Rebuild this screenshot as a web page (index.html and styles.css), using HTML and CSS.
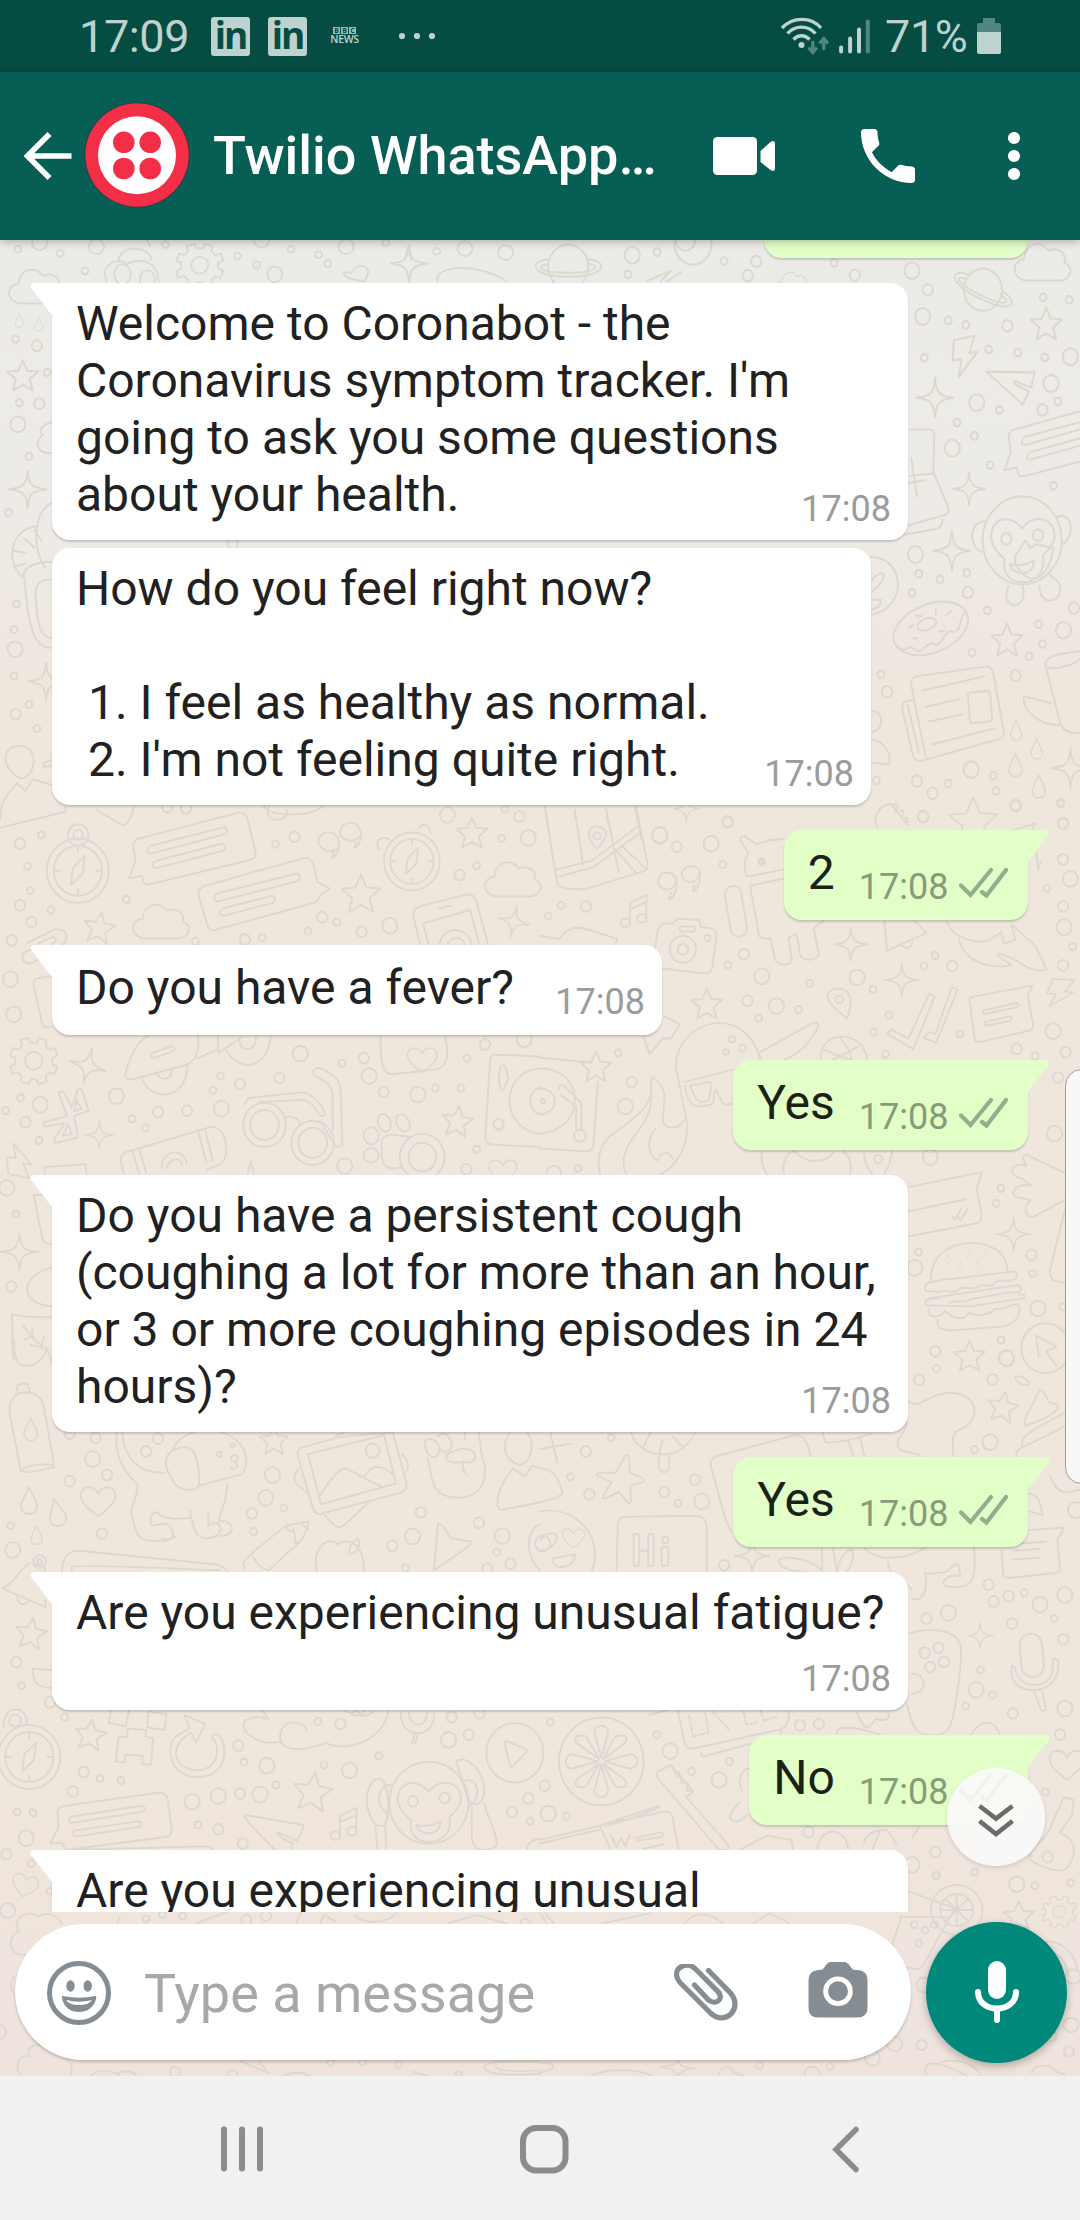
FILE: index.html
```html
<!DOCTYPE html>
<html lang="en">
<head>
<meta charset="utf-8">
<title>Chat</title>
<link rel="stylesheet" href="styles.css">
</head>
<body>
<div class="phone">
  <div class="status">
    <span class="status-time">17:09</span>
    <span class="linkedin">in</span>
    <span class="linkedin">in</span>
    <span class="bbc"><span class="bbc-row"><b>B</b><b>B</b><b>C</b></span><span class="bbc-news">NEWS</span></span>
    <svg class="status-dots" width="38" height="8" viewBox="0 0 38 8"><circle cx="4" cy="4" r="3.1"/><circle cx="19" cy="4" r="3.1"/><circle cx="34" cy="4" r="3.1"/></svg>
    <svg class="wifi" width="50" height="38" viewBox="780 17 50 38" fill="none">
      <g stroke="#bed2cf" stroke-width="3.4"><path d="M782 28C793 16.500 811 16.500 821 28"/><path d="M787.500 33.500C795 25 808 25 815.500 33.500"/><path d="M793.500 39.500C798 34.500 805 34.500 809.500 39.500"/></g>
      <circle cx="801.500" cy="45" r="3" fill="#bed2cf"/>
      <path d="M812.800 41V51M808.500 47.500L812.800 52.500 817 47.500M823.800 50V40M819.500 43.500L823.800 38.500 828 43.500" stroke="#528680" stroke-width="3.200"/>
    </svg>
    <svg class="signal" width="31" height="35" viewBox="838.500 19.500 31 35" stroke-width="4" stroke-linecap="round" stroke="#bed2cf"><path d="M840.600 48V52M849.600 39V52M858.500 30V52"/><path d="M867.300 22V52" stroke="#528680"/></svg>
    <span class="percent">71%</span>
    <svg class="battery" width="24" height="36" viewBox="0 0 24 36"><path d="M6 0H18V5H22Q24 5 24 7V15H0V7Q0 5 2 5H6Z" fill="#528680"/><path d="M0 14H24V34Q24 36 22 36H2Q0 36 0 34Z" fill="#bed2cf"/></svg>
  </div>

  <header class="header">
    <svg class="back" width="48" height="50" viewBox="24.500 131 48 50" fill="none" stroke="#fff" stroke-width="5.600"><path d="M50 134L28 156 50 178M28 156H72"/></svg>
    <svg class="avatar" width="106" height="106" viewBox="0 0 106 106"><circle cx="53" cy="53" r="52.500" fill="#37333f"/><circle cx="53" cy="53" r="51.700" fill="#f22f46"/><circle cx="53" cy="53.300" r="39" fill="#fff"/><g fill="#f22f46"><circle cx="39.800" cy="40.300" r="10.800"/><circle cx="66.200" cy="40.300" r="10.800"/><circle cx="39.800" cy="66.500" r="10.800"/><circle cx="66.200" cy="66.500" r="10.800"/></g></svg>
    <h1 class="title">Twilio WhatsApp…</h1>
    <svg class="video" width="62" height="38" viewBox="0 0 62 38" fill="#fff"><rect width="44" height="38" rx="4.500"/><path d="M47.500 14L57.500 5Q62 2.500 62 7V31Q62 35.500 57.500 33L47.500 25Z"/></svg>
    <svg class="call" width="54" height="54" viewBox="3 3 18 18" fill="#fff"><path d="M6.620 10.790c1.440 2.830 3.760 5.140 6.590 6.590l2.200-2.200c.270-.270.670-.360 1.020-.240 1.120.370 2.330.570 3.570.570.550 0 1 .450 1 1V20c0 .550-.450 1-1 1-9.390 0-17-7.610-17-17 0-.550.450-1 1-1h3.500c.550 0 1 .450 1 1 0 1.250.200 2.450.570 3.570.110.350.030.740-.250 1.020l-2.200 2.200z"/></svg>
    <svg class="menu" width="14" height="50" viewBox="0 0 14 50" fill="#fff"><circle cx="7" cy="7" r="6.100"/><circle cx="7" cy="25" r="6.100"/><circle cx="7" cy="43" r="6.100"/></svg>
  </header>

  <main class="chat">
    <svg class="wallpaper" width="1080" height="1836" viewBox="0 240 1080 1836" fill="none" stroke-width="5.500" stroke-linejoin="round" stroke-linecap="round">
      <defs>
        <marker id="s" markerUnits="userSpaceOnUse" markerWidth="60" markerHeight="60" overflow="visible"><circle r="10" class="ink"/></marker>
        <marker id="m" markerUnits="userSpaceOnUse" markerWidth="60" markerHeight="60" overflow="visible"><circle r="15" class="ink"/></marker>
        <marker id="l" markerUnits="userSpaceOnUse" markerWidth="60" markerHeight="60" overflow="visible"><circle r="22" class="ink"/></marker>
        <path id="star" d="M0-44L13-15 45-13 20 9 29 40 0 24-28 40-20 9-45-12-13-15Z"/>
        <path id="spark" d="M0-52C3-12 12-4 54 0 12 5 4 12 0 52-4 12-12 5-54 0-12-4-3-12 0-52Z"/>
        <path id="cloud" d="M-50 46C-92 40-92-6-54-10C-52-52-4-62 16-32C48-44 70-22 62-2C94 12 80 44 48 46Z"/>
        <path id="heart" d="M0 42C-20 25-54 5-50-20C-46-46-10-46 0-20C10-46 46-46 50-20C54 5 20 25 0 42Z"/>
        <path id="drop" d="M0-38C12-10 24 0 24 18C22 44-20 44-23 18C-24 0-10-12 0-38Z"/>
        <g id="gear"><path d="M-14-64L-10-50H10L14-64 36-58 34-42 46-30 62-36 68-14 54-8V10L68 16 60 38 46 32 34 44 38 58 14 66 8 52H-8L-14 66-38 58-34 44-46 32-62 38-68 16-54 10V-8L-68-14-60-36-46-30-34-42-38-58Z"/><circle r="25"/></g>
        <g id="chatbox"><path d="M-172-40Q-178-62-155-68L130-140Q152-145 158-125L182-30Q186-12 165-8L-125 60Q-140 64-145 50L-148 36-186 44-166-5Z"/><path d="M-128-46Q-140-22-120-26L92-80Q108-88 92-100L-122-48M-112-4Q-124 18-104 14L88-34Q104-44 86-54L-106-6"/></g>
        <path id="bolt" d="M-30-42L30-54 14-8 38-12-16 54-8 8-34 10Z"/>
        <g id="planet"><circle r="58"/><path d="M-56-20C-120-14-106 26 0 26C110 26 120-14 58-20M-60-6C-100-2-80 16 0 16C84 16 96-4 60-8" /></g>
        <g id="clock"><circle r="90"/><circle r="70"/><path d="M0-70V-52M0 70V52M-70 0H-52M70 0H52M-20 40L-14-8 20-42 14 8Z"/></g>
        <g id="note"><ellipse cx="-22" cy="34" rx="14" ry="12"/><ellipse cx="26" cy="22" rx="14" ry="12"/><path d="M-10 32L-8-22 40-44 38 22M-8-4L38-24"/></g>
        <g id="monkey"><circle r="115"/><path d="M-90-10C-90-62-30-70 0-30C30-74 96-60 94-8C92 10 76 26 60 40C70 90 30 110 0 110C-40 108-60 80-50 50C-74 30-88 15-90-10Z"/><circle cx="-46" cy="-4" r="15"/><circle cx="46" cy="-14" r="15"/><path d="M-36 62Q0 70 34 52Q34 84 0 86Q-30 84-36 62ZM-110-50C-150-50-160 10-118 30M100-60C140-80 160-20 118 10"/></g>
      </defs>

      <!-- Top left -->
      <g transform="translate(0 240) scale(.3444 .3333)">
        <polyline points="52,28 175,40 480,14 690,48 845,28 925,44 1268,34 1120,8" class="s"/>
        <polyline points="115,8 280,20 760,0 1005,20 1350,26 1468,38" class="l"/>
        <path d="M345 60C350 10 440 20 440 60M370 0C390-30 430-10 436 20M1175 60L1185 20 1195 60"/>
        <use href="#gear" x="580" y="76"/>
      </g>
      <g transform="translate(0 260) scale(.3444 .3571)">
        <use href="#cloud" x="108" y="76"/><use href="#spark" x="1188" y="10"/>
        <path d="M310 60C290 20 330-10 370 10C420-10 460 10 460 60M1270 60C1260 10 1400 10 1470 60M1060 60C980 50 990 30 1020 36C1040 0 1080 20 1066 44Z"/>
        <ellipse cx="356" cy="40" rx="24" ry="28"/><ellipse cx="428" cy="55" rx="22" ry="26"/>
        <use href="#drop" transform="translate(56 170) scale(.5)"/><use href="#drop" transform="translate(112 180) scale(.5)"/>
        <use href="#star" x="66" y="325"/><use href="#spark" x="80" y="642"/><use href="#spark" x="134" y="1180"/>
        <polyline points="247,30 745,14 952,10 45,222 137,315 56,400 84,550 25,708 48,964 41,1035 41,1165 84,1245 107,1312" class="s"/>
        <polyline points="107,240 114,402 45,1272 676,794 540,1536 486,1532" class="m"/>
        <polyline points="52,460 44,1090 798,40" class="l"/>
        <path d="M150 680C100 700 90 800 130 860M150 455C120 460 110 480 125 490C95 510 110 545 150 540M110 745C30 750 10 850 70 890C80 960 80 1090 150 1086M100 755L120 785M70 780L100 805M40 815L75 820M40 860L72 850M150 895C100 890 100 930 105 960C110 1010 110 1050 150 1060M70 890C60 860 110 845 150 845"/>
        <path d="M55 1360C0 1360 5 1430 62 1452C112 1440 110 1360 55 1360ZM150 1400L125 1410 130 1420 150 1416M0 1568C0 1500 40 1480 50 1465L74 1486 96 1454 150 1470M190 1530V1545L0 1590M390 1530C380 1560 370 1590 350 1580L280 1540"/>
      </g>

      <!-- Top right -->
      <g transform="translate(540 240) scale(.3444 .3827)">
        <use href="#planet" x="82" y="70"/><circle cx="444" cy="10" r="54"/><circle cx="422" cy="0" r="28"/><use href="#cloud" x="1460" y="60"/>
        <use href="#planet" transform="translate(1286 130) rotate(24) scale(.95)"/><use href="#cloud" transform="translate(735 114) scale(.6)"/>
        <path d="M310 108L380 80 350 108M370 108L408 85"/>
        <use href="#star" x="1470" y="220"/><use href="#bolt" x="1232" y="304"/><use href="#spark" x="1147" y="412"/><use href="#spark" transform="translate(1246 650) scale(.85)"/><use href="#spark" x="1196" y="812"/>
        <path d="M1296 344L1436 346 1426 386 1378 368 1376 376 1420 396 1402 430Z"/>
        <use href="#chatbox" transform="translate(1525 560) scale(.95)"/>
        <path d="M1075 495H1130Q1145 495 1145 510L1142 605 1186 700Q1190 715 1170 720L1060 748M1142 610L1074 616M1078 570L1095 670M1065 635L1118 628M1168 730Q1170 750 1150 755L1060 770"/>
        <g transform="translate(1400 785)"><use href="#monkey"/><path d="M-20 40L10 0 24 20 40 10 90 20C80 100 20 130-20 60ZM-40 120C-70 180 20 190 2 120M50 120C50 180 130 160 106 110L80 90"/></g>
        <path d="M962 828C1060 830 1070 960 962 980M962 890C1000 850 1020 880 962 920M962 940H990Q990 960 965 965"/>
        <g transform="translate(1135 1015) rotate(-18)"><ellipse rx="112" ry="64"/><ellipse cx="-8" cy="-14" rx="28" ry="15"/><path d="M-110 10C-90 50-80 10-60 40C-40 60-20 20 0 46C20 50 40 10 60 30C90 30 80 0 108-8M-60-20L-45-25M-30-45L-15-38M30-45L24-30M55-20L70-25M-60 8L-45 12M20 15L35 18"/></g>
        <use href="#star" x="1356" y="1046"/>
        <path d="M1078 1160Q1075 1145 1095 1140L1290 1115Q1312 1112 1316 1132L1347 1285Q1350 1300 1330 1305L1110 1360Q1090 1366 1082 1345L1052 1225Q1050 1205 1070 1204L1086 1202ZM1086 1202L1120 1350M1068 1215L1100 1340M1110 1178L1290 1140M1120 1220L1215 1200M1130 1258L1225 1240M1140 1318L1320 1276"/><rect x="1245" y="1180" width="65" height="80" rx="8" transform="rotate(-5 1278 1220)"/>
        <path d="M1568 1075C1500 1080 1460 1090 1468 1115C1500 1125 1550 1110 1568 1095M1470 1120L1510 1260C1520 1290 1550 1290 1568 1288M1485 1210L1405 1192C1400 1230 1450 1270 1512 1268"/>
        <use href="#drop" transform="translate(1382 1282) scale(.7)"/><use href="#drop" transform="translate(1442 1330) scale(.7)"/><use href="#drop" transform="translate(1380 1372) scale(.8)"/><use href="#drop" transform="translate(1448 1428) scale(.8)"/><use href="#spark" x="1540" y="1380"/>
        <path d="M14 1480L30 1568M275 1480L295 1568M102 1490V1510M195 1500V1520M962 1230C1000 1230 1000 1280 966 1285M962 1305C1000 1310 1020 1340 1014 1370L962 1366"/>
        <polyline points="340,32 535,55 255,90 854,60 1461,150 1536,156 1186,210 1236,222 1116,308 1303,286 1387,294 1466,307 1334,444 1504,422 1211,477 1261,512 1307,588 1491,642 1100,872 1161,887 1080,922 1239,870 1299,968 1448,1004 1459,1056 1254,1078 1420,1088 990,1135 1316,1400 1186,1420 1324,1440 1512,1470 977,1412" class="s"/>
        <polyline points="628,56 603,93 914,92 1126,130 1357,224 1459,444 1242,921 1550,962 1381,1138 1008,1180 1094,1414 1140,1446 1381,1478 1112,1506 545,1520 1519,1524" class="m"/>
        <polyline points="268,40 1080,80 1111,200 1268,425 1484,375 1197,544 1540,305 1520,1020 1252,1384 1090,822 348,1556" class="l"/>
      </g>

      <!-- Middle left -->
      <g transform="translate(0 800) scale(.3444 .3571)">
        <use href="#clock" x="226" y="198"/><circle cx="227" cy="98" r="30"/><circle cx="227" cy="98" r="14"/>
        <use href="#chatbox" x="560" y="176"/>
        <path d="M578 272Q572 248 595 240L880 164Q902 158 910 180L922 230 958 248 928 268Q926 285 905 290L625 364Q608 368 602 350ZM630 262Q612 280 634 284L862 228Q880 216 862 206L630 262M646 304Q628 320 650 324L792 288Q806 276 790 268L646 304"/>
        <path d="M985 130C960 160 910 130 928 104C950 76 990 94 984 130Q982 155 965 162L968 145M1048 100C1020 130 975 105 990 80C1010 50 1050 64 1048 100Q1046 125 1030 134L1034 118"/>
        <use href="#clock" transform="translate(1196 172) scale(.9)"/><path d="M1100 138C1085 110 1110 100 1130 110M1214 80C1230 60 1250 70 1250 94"/>
        <use href="#star" x="1370" y="93"/><use href="#star" stroke-width="4.500" transform="translate(1048 264) scale(1.250)"/><use href="#star" transform="translate(288 358) rotate(10)"/>
        <use href="#cloud" x="1490" y="224"/><use href="#cloud" x="468" y="342"/><use href="#spark" transform="translate(1492 340) scale(.85) rotate(12)"/>
        <path d="M1220 406L1200 325Q1198 305 1218 298L1355 265Q1375 262 1382 280L1418 406M1245 406L1228 345 1365 308 1392 406M1275 303L1310 296M1275 406C1285 350 1360 350 1370 406M1300 406C1305 380 1345 380 1350 406"/>
        <path d="M80 400L160 362C200 360 200 390 180 406M110 402L150 384C165 382 165 395 150 405M90 420C60 420 55 455 85 458C95 456 105 450 112 446M150 492L105 500Q95 505 98 520L122 625Q126 640 150 636"/>
        <path d="M770 14C740 36 900 60 940 14M780 20C760 60 830 70 835 30"/>
        <use href="#gear" x="98" y="730"/><use href="#spark" transform="translate(255 745) rotate(15)"/><use href="#spark" transform="translate(288 938) scale(.75)"/>
        <path d="M170 820Q175 812 185 818L208 862 225 812Q235 805 240 818L258 870 215 885 226 945 165 960Q155 958 158 948L188 905 130 915Q122 910 128 902L195 885 170 820M222 840L236 865 216 872ZM198 908L208 935 182 940Z"/>
        <path d="M430 660C390 680 370 740 363 770Q365 785 385 782L540 742C570 730 580 700 575 660M440 710L495 690Q510 690 505 702L450 722Q430 720 440 710ZM572 724L632 698M413 780C430 840 540 850 545 742M454 765C470 790 500 785 500 752M632 660L635 708 700 665M655 700C700 770 780 750 786 660M695 665C690 710 750 710 742 660"/>
        <circle cx="768" cy="910" r="62"/><circle cx="768" cy="910" r="42"/><circle cx="908" cy="960" r="62"/><circle cx="908" cy="960" r="42"/>
        <path d="M830 890C850 880 870 895 872 912M712 850L720 835 880 818C920 830 940 860 944 880Q935 890 925 880C910 850 890 838 870 840L750 846M908 762C915 745 930 750 940 756C990 780 990 800 990 830L994 965Q985 975 975 970L930 900M966 925V830C966 800 950 790 920 775Q905 770 908 762"/>
        <path d="M1105 660C1105 720 1105 770 1140 768L1270 754C1310 740 1300 690 1292 660"/><use href="#heart" transform="translate(1226 728) scale(.85)"/>
        <path d="M1568 718L1440 713Q1425 712 1423 730L1409 940Q1408 962 1428 965L1568 972M1568 752C1450 760 1450 920 1568 935M1568 805C1530 815 1530 870 1568 880M1452 750Q1462 735 1468 750L1476 780 1464 808Q1456 820 1452 806L1448 780Z"/><circle cx="1448" cy="908" r="15"/>
        <ellipse cx="1116" cy="904" rx="18" ry="26" transform="rotate(-20 1116 904)"/><ellipse cx="1170" cy="904" rx="18" ry="26" transform="rotate(-30 1170 904)"/><ellipse cx="1078" cy="940" rx="22" ry="24"/><ellipse cx="1078" cy="995" rx="22" ry="20"/>
        <path d="M1190 945C1150 935 1105 930 1108 960C1110 990 1100 1030 1140 1032L1168 1028"/><circle cx="1226" cy="1000" r="65"/><circle cx="1226" cy="1000" r="40"/>
        <use href="#star" transform="translate(1328 900) rotate(8)"/><use href="#heart" transform="translate(1460 1040) scale(.8)"/><use href="#bolt" transform="translate(54 1010) scale(1 -.9)"/>
        <path d="M360 1050L350 1010Q350 990 370 985L610 916C660 910 670 1000 640 1020L600 1035M385 985L405 1048M405 980L425 1045M575 925L600 1018M595 920L618 1012M470 1030C465 980 540 970 542 1020M485 1030C490 1000 525 1000 528 1022M130 1050V1028L248 1020 252 1048M718 1050L728 1012 738 1050"/>
        <path d="M150 1106H98L122 1225Q128 1245 150 1245M150 1310C60 1330 50 1410 150 1418M150 1448C110 1450 80 1450 34 1440C40 1480 30 1550 42 1568M68 1474L125 1535M94 1510V1480M94 1500L70 1512M120 1532L128 1500"/><use href="#spark" x="56" y="1265"/>
        <polyline points="120,98 80,186 88,254 148,308 367,278 800,124 895,367 761,386 1384,184 1456,108 1466,26 60,834 16,870 113,954 640,773 618,813 384,893 422,918 993,737 1264,807 1338,807 1356,723 1384,978 46,1160 978,342 567,396" class="s"/>
        <polyline points="58,122 58,295 91,342 34,393 855,103 1334,210 1050,369 935,328 711,390 1508,46 74,902 459,874 543,870 697,795 811,778 1056,723 1114,817 1408,685 33,1362 1354,1034 540,22 486,20" class="m"/>
        <polyline points="30,502 40,600 1299,42 1534,106 1132,352 338,829 117,853 872,710 643,864 1072,773 1213,825 1001,1025 20,1086 1522,670" class="l"/>
      </g>

      <!-- Middle right -->
      <g transform="translate(540 800) scale(.3444 .3571)">
        <path d="M14 20L50 235Q55 250 130 250L300 200Q315 195 312 180L280 20M48 195L150 170 290 70M52 215L155 188 290 92M215 135L280 205M240 130L305 190M102 35L125 180M192 25L228 200" /><path d="M165 138C120 90 150 70 168 75C200 80 200 100 165 138Z"/><circle cx="166" cy="100" r="10"/>
        <use href="#spark" transform="translate(425 25) scale(.7)"/>
        <path d="M395 228C380 270 340 245 343 225C350 190 400 200 397 235Q395 270 375 280L380 260M462 206C450 250 405 225 412 202C425 175 470 180 465 215Q462 250 444 256L448 240"/>
        <use href="#note" transform="translate(270 310)"/>
        <path d="M0 380L55 390C90 340 120 355 225 390L218 405M328 450L342 365Q345 348 365 345L385 346 400 332 462 336 466 354 498 360Q515 365 512 385L500 470Q496 488 478 485L335 470"/><circle cx="415" cy="418" r="38"/><circle cx="415" cy="418" r="15"/><circle cx="486" cy="386" r="9"/><rect x="405" y="354" width="45" height="14" rx="7"/>
        <path d="M706 110C680 110 650 115 630 125L595 102Q580 100 582 115L605 150C590 170 592 190 600 215L706 195M706 220L610 240 636 380Q640 390 670 388L682 445C690 465 735 470 730 440L722 385 745 375 756 435C765 455 815 450 808 425L795 360 825 336"/><circle cx="644" cy="173" r="5"/><rect x="545" y="240" width="48" height="144" rx="24" transform="rotate(-10 569 312)"/>
        <path d="M980 75C960 50 990 10 1020 12L1068 70M1025 20Q1030 5 1040 18L1030 35M1045 30Q1058 25 1055 42M1060 50Q1070 48 1066 62"/>
        <use href="#star" stroke-width="3.600" transform="translate(1258 60) scale(1.550)"/><path d="M1375 84L1438 66 1428 84M1440 130L1446 195 1455 170M1000 340L1008 422 1122 372 1090 340M1050 405C1060 420 1080 415 1082 395M1180 340C1200 390 1260 400 1300 395L1340 370 1346 402 1380 392 1370 350 1440 410 1470 475C1420 490 1390 440 1330 430C1330 450 1370 455 1368 465C1300 470 1240 460 1215 390"/>
        <use href="#spark" transform="translate(902 404) scale(.9)"/><use href="#spark" transform="translate(1050 504) scale(.9)"/>
        <use href="#star" x="484" y="572"/><use href="#star" x="162" y="748"/>
        <path d="M892 612C850 580 830 560 836 545C845 520 895 520 902 560Q902 580 892 612Z"/><circle cx="869" cy="559" r="11"/>
        <path d="M1008 655L1020 642 1070 668 1130 542 1146 550 1084 698ZM1114 665L1130 650 1148 655 1196 524 1212 532 1150 680Z"/>
        <path d="M1248 565Q1245 552 1262 550L1430 520 1416 548 1432 630Q1434 642 1420 646L1275 678Q1265 680 1262 668ZM1285 590L1385 568Q1395 575 1385 580L1290 600ZM1290 622L1365 606Q1375 612 1365 618L1295 632Z"/><use href="#bolt" transform="translate(1508 540) scale(1 .8) rotate(15)"/>
        <path d="M395 750C390 620 590 560 640 725M420 790L560 755M395 750L427 905C430 980 390 1030 350 1048M420 800Q430 860 460 858L490 855Q510 850 505 825L510 810 530 850Q545 855 558 850M435 800L490 790Q500 790 498 800L490 840Q470 850 455 840ZM640 706L790 625Q815 620 805 640C780 690 740 715 710 728M815 728C810 640 940 640 950 728M825 700L900 728M870 665C890 690 900 700 905 728M925 690L850 728"/>
        <circle cx="558" cy="670" r="9"/><circle cx="540" cy="705" r="8"/><circle cx="588" cy="695" r="10"/>
        <path d="M0 722L150 735M168 790L155 965Q152 985 130 984L0 976M0 752C130 750 140 920 0 935M0 808C60 810 55 880 0 880M55 810Q50 795 70 800L120 850V925M105 925V860L60 825"/><circle cx="116" cy="940" r="17"/><circle cx="8" cy="843" r="6"/>
        <path d="M325 775C400 820 330 900 370 915Q400 925 420 895M325 775C315 840 340 850 290 920C250 970 230 1000 250 1048M320 828C310 870 260 900 220 930C180 950 160 1000 175 1048M335 920C310 950 310 990 340 1010C350 990 370 975 385 1005M645 984C640 1010 650 1040 660 1048M710 1048C700 1020 715 990 735 984M740 984C770 1020 830 1020 855 984M880 984C905 1000 905 1030 900 1048M940 984C940 1010 950 1030 965 1048M1022 984C1020 1010 1010 1030 1000 1048M300 660L318 712 355 668 380 668 406 628 360 605"/><circle cx="982" cy="1006" r="12"/>
        <path d="M1070 1084L1284 1042 1268 1088 1282 1160Q1284 1182 1265 1186L1070 1222M1070 1152L1235 1118M1195 1165L1205 1176 1222 1145M1215 1168L1222 1176 1242 1145"/>
        <path d="M1525 1045L1410 992Q1395 1000 1412 1025C1370 1010 1350 1050 1400 1060L1425 1080C1380 1070 1350 1110 1400 1115L1425 1120C1400 1140 1410 1165 1430 1168L1525 1120"/><use href="#spark" transform="translate(1375 1216) scale(.9)"/>
        <path d="M1135 1345C1130 1210 1360 1210 1358 1320M1120 1375C1110 1345 1150 1350 1160 1345L1380 1320C1395 1340 1370 1350 1350 1345L1325 1348C1310 1375 1290 1345 1270 1365C1250 1375 1230 1355 1210 1375C1190 1385 1180 1365 1165 1378ZM1130 1395L1390 1358C1405 1370 1390 1385 1370 1378L1250 1398C1230 1410 1210 1400 1190 1408M1122 1415C1110 1390 1150 1400 1160 1395M1122 1415L1250 1418 1405 1395Q1412 1380 1390 1385M1130 1425C1120 1450 1160 1455 1175 1430C1200 1455 1230 1460 1245 1435C1270 1450 1310 1440 1320 1425C1350 1430 1360 1410 1390 1412C1400 1450 1370 1475 1330 1475L1200 1485C1160 1485 1150 1475 1155 1455"/>
        <use href="#drop" transform="translate(1184 1286) scale(.3)"/><use href="#drop" transform="translate(1248 1274) scale(.3)"/><use href="#drop" transform="translate(1295 1272) scale(.3)"/><use href="#drop" transform="translate(1220 1302) scale(.3)"/><use href="#drop" transform="translate(1272 1300) scale(.3)"/>
        <circle cx="1468" cy="1535" r="70"/><path d="M1440 1500L1500 1530 1470 1545 1500 1585M1440 1500L1448 1560"/><path d="M1525 1145L1480 1320Q1480 1345 1500 1348L1568 1358"/>
        <polyline points="61,295 24,325 531,181 644,173 783,514 967,530 635,611 545,462 751,587 1013,602 1115,465 1147,435 968,650 1219,655 1472,247 1547,411 1512,10 227,708 110,1032 1338,1088 1325,1130 1099,1266 1438,717 1338,1512 1518,1420 1430,1326 1003,712" class="s"/>
        <polyline points="133,298 397,131 545,62 592,432 602,562 1197,465 1384,697 1504,777 1526,706 1519,298 1519,166 1519,66 1519,463 266,790 1148,1544 1427,1274 1381,15 1112,48" class="m"/>
        <polyline points="348,98 497,122 644,494 687,577 921,497 1490,647 1540,221 1522,356 248,858 1494,934 1133,1000 1446,1424 1088,1310 1354,1562 40,1046" class="l"/>
      </g>

      <!-- Lower left -->
      <g transform="translate(0 1340) scale(.3444 .3571)">
        <path d="M42 0C40 50 50 75 75 72C110 72 130 50 135 20L150 60M88 14L125 22M48 130Q45 125 80 122L88 150M48 130L52 150M52 150C25 170 25 190 30 215L60 365Q66 378 158 356L128 190C120 150 90 140 52 150M62 368C70 345 150 345 158 355"/><use href="#drop" transform="translate(89 250) scale(.85)"/>
        <use href="#drop" x="84" y="450"/><use href="#drop" transform="translate(165 484) rotate(-12)"/><use href="#drop" transform="translate(106 546) scale(.7)"/><use href="#heart" x="285" y="452"/>
        <path d="M340 258C330 320 360 370 400 405C400 450 370 470 385 500C395 540 400 562 440 562H480C520 560 500 510 470 515L440 520C430 490 450 470 465 490C490 505 520 500 552 498M355 258C360 330 400 375 480 372M500 310C530 240 640 235 690 285C720 310 720 350 705 375L578 408M500 310C560 280 580 320 578 408C560 430 510 420 500 390C480 360 470 330 500 310ZM552 478C560 530 570 555 600 555C650 555 650 510 620 512L605 520V485M660 400C660 460 640 470 635 508C680 500 690 550 640 548M510 550C500 560 480 558 470 555M670 330C680 310 700 330 684 342Q670 340 670 330M684 342L690 355Q680 365 670 358"/><circle cx="637" cy="320" r="7"/><circle cx="675" cy="295" r="6"/>
        <use href="#star" transform="translate(795 282) scale(.92)"/>
        <path d="M865 325Q860 305 880 300L985 272 1140 258 1180 400Q1184 420 1162 428L935 486Q915 492 908 470ZM894 320L1115 266 1150 402 932 460ZM925 440C960 390 990 350 1010 362L1110 412M1060 380C1080 345 1110 350 1145 378M868 360C850 380 850 400 870 410L895 430M1168 320Q1195 350 1178 370M940 488L970 518Q985 530 1000 518L1070 455M975 268L1000 258"/><circle cx="1082" cy="310" r="20"/>
        <path d="M1235 300C1220 270 1270 270 1275 300C1280 340 1240 335 1235 300M1270 270C1290 250 1310 270 1312 300C1300 320 1280 315 1275 300M1240 330C1260 380 1240 440 1330 442C1410 440 1420 370 1400 330L1390 260M1300 320C1350 290 1390 310 1378 335C1360 350 1350 340 1345 340Q1340 365 1356 378M1345 340C1310 350 1285 335 1300 320M1350 260V280"/>
        <path d="M1480 260C1450 300 1470 340 1510 350C1550 340 1550 280 1530 258M1568 455L1455 476C1430 470 1450 400 1490 360L1525 382 1545 352 1568 358"/>
        <path d="M710 640C700 620 710 610 830 520L896 508Q888 550 865 570L780 645M830 520C840 545 850 535 852 530C860 550 850 570 865 568M735 605Q750 640 780 645M875 515L895 530M920 650C905 570 960 550 980 572C1020 550 1060 580 1056 650M1015 600C1010 570 1040 550 1042 560C1045 580 1040 595 1015 600M1260 645L1272 515Q1280 510 1310 555L1370 565Q1375 572 1260 645M1568 515C1530 530 1520 600 1568 645M180 650Q180 590 230 590L620 628C645 630 655 640 660 650M208 650V635Q215 628 640 645"/><circle cx="1576" cy="570" r="22"/>
        <path d="M88 625C60 630 50 680 5 695L132 748V730M132 655L130 640Q128 628 100 630M50 718C50 745 80 745 82 730"/><circle cx="115" cy="620" r="18"/><circle cx="115" cy="620" r="7"/>
        <use href="#star" transform="translate(90 822) rotate(8)"/><path d="M150 925L95 920C95 960 110 975 150 974"/>
        <use href="#clock" x="85" y="1168"/><path d="M10 1082C10 1020 80 1020 78 1076"/><circle cx="44" cy="1066" r="17"/><use href="#star" transform="translate(262 1106) rotate(8)"/>
        <path d="M322 1036L316 1072 365 1082 375 1036M430 1040L484 1048 478 1092 428 1085ZM370 1088L425 1092 422 1110 445 1116 438 1190 412 1186 415 1165 364 1160 362 1184 336 1180 345 1110 370 1112Z"/>
        <path d="M535 1050L595 1075 570 1128 555 1100C480 1140 510 1205 575 1205C640 1200 640 1130 615 1115Q620 1098 635 1105C670 1150 650 1225 572 1224C490 1220 480 1140 510 1110L550 1088Z"/>
        <path d="M760 1036L780 1062C700 1040 690 1090 730 1110C760 1130 790 1130 815 1125M815 1125C800 1060 880 1060 890 1092M815 1125C840 1160 900 1145 945 1128C1020 1160 1120 1110 1126 1040M1000 1036C1030 1055 1060 1060 1085 1040M1020 1050L1030 1036 1050 1050 1060 1036"/>
        <path d="M1186 1040C1190 1090 1240 1090 1240 1040M1164 1045C1160 1120 1265 1120 1260 1045M1205 1100L1195 1130H1205L1215 1100"/>
        <circle cx="1495" cy="1156" r="83"/><path d="M1465 1125Q1465 1118 1530 1148 1530 1155 1486 1196Q1480 1198 1465 1125Z"/>
        <use href="#star" stroke-width="4.500" transform="translate(908 1266) scale(1.250) rotate(8)"/><use href="#note" x="996" y="1354"/><use href="#monkey" x="1245" y="1296"/>
        <path d="M1065 1300C1065 1250 1080 1225 1105 1230C1130 1240 1135 1340 1115 1360Q1080 1370 1065 1300M1090 1362L1096 1428M1118 1360L1122 1428M1325 1180C1340 1165 1390 1180 1406 1250C1410 1300 1380 1310 1360 1290ZM1370 1310V1400L1384 1425Q1420 1435 1442 1415C1445 1380 1420 1350 1406 1298"/>
        <path d="M168 1330Q162 1310 185 1305L460 1268Q485 1266 488 1290L498 1370Q500 1390 480 1392L190 1428 180 1408 146 1410 170 1365ZM205 1335Q195 1355 210 1352L410 1322Q430 1312 412 1304L205 1335ZM215 1374Q208 1395 225 1390L405 1364Q420 1352 400 1348L215 1374ZM712 1330L880 1358Q882 1368 862 1402L805 1378Q800 1388 850 1410L844 1428M712 1335Q710 1345 800 1428M190 1428L590 1418Q615 1418 618 1428M1530 1428C1530 1400 1568 1395 1568 1395"/>
        <use href="#heart" transform="translate(72 1528) rotate(15) scale(.75)"/>
        <polyline points="31,520 824,471 1177,638 63,968 188,1056 351,1234 290,1228 50,1322 96,1324 575,1358 709,1182 801,1246 941,1190 923,1068 1539,1348 1442,594 91,1466 736,536 1100,1164" class="s"/>
        <polyline points="202,395 311,378 459,276 424,312 277,274 731,486 296,542 1139,576 1222,483 1391,512 1415,640 1482,626 48,902 145,1015 243,1210 212,1264 692,1136 989,1075 1311,1056 1361,1105 697,1270 705,1410 634,1370 1487,1322 1534,1284 19,1440 1392,1045 202,262" class="m"/>
        <polyline points="269,333 791,378 772,442 37,588 1198,550 1458,549 634,1277 755,1273 775,1192 1015,1205 1302,1120 76,1395 558,1293" class="l"/>
      </g>

      <!-- Lower right -->
      <g transform="translate(540 1340) scale(.3444 .3571)">
        <use href="#star" transform="translate(1247 46)"/><use href="#star" transform="translate(1344 188) rotate(10)"/>
        <path d="M1070 170C1100 200 1120 150 1190 148C1280 150 1280 230 1220 250C1190 260 1200 290 1200 326M1065 230C1060 270 1030 270 1040 300C1050 320 1090 310 1105 326M895 280L910 326M930 275L942 326M820 260L830 288Q900 285 960 262M1410 240C1400 220 1420 200 1425 190L1450 140Q1460 135 1478 175C1530 180 1500 210 1410 240ZM1400 300C1390 260 1460 240 1530 200M1385 326C1370 300 1420 300 1525 240M1380 105C1390 95 1420 110 1420 125C1400 130 1385 120 1380 105Z"/>
        <path d="M30 260L50 342M0 305L90 290M265 260C280 320 400 360 450 260M355 280L345 326V360Q360 380 375 360V325M300 300L320 260M415 300L385 270M248 324Q258 320 258 330L262 372 300 388Q305 398 292 400L262 408 264 455Q258 460 252 452L230 425 188 444Q180 444 184 434L208 398 166 380Q164 372 174 372L220 372Z"/>
        <path d="M0 360C50 360 60 410 66 430Q50 445 0 454M555 535C540 520 530 470 495 350Q495 330 515 325L740 266Q775 262 785 326M222 650L226 515Q228 495 250 495L455 492Q480 494 484 520V650M0 480C100 460 190 550 150 650M0 560C30 530 60 540 45 565Q30 590 0 590"/><use href="#heart" transform="translate(97 555) scale(.65)"/><path d="M35 612L102 600C100 640 40 650 35 612"/><rect x="272" y="543" width="16" height="90" rx="3"/><rect x="314" y="543" width="16" height="90" rx="3"/><path d="M288 590H314"/><rect x="353" y="580" width="20" height="52" rx="3"/><circle cx="364" cy="560" r="9"/>
        <use href="#spark" transform="translate(616 605) scale(.95)"/><path d="M820 648C800 620 720 600 695 615C690 640 740 650 780 650M818 580L820 650M850 580L862 650M862 650C870 600 900 580 910 590C910 620 900 640 888 650M940 580C970 620 1060 620 1120 580M1010 620C1020 680 1050 660 1080 700M1118 650C1130 720 1100 730 1080 725M1260 580C1270 680 1250 700 1180 690C1160 680 1180 655 1220 660L1215 630C1200 620 1190 650 1175 650L1120 655"/>
        <path d="M1340 590L1345 655Q1345 668 1365 666L1500 652Q1512 650 1510 640L1502 560 1522 526 1420 532M1395 570L1470 565M1372 590L1450 585M1372 615L1450 610M1420 430C1460 440 1450 470 1460 490L1420 480M1480 380C1510 450 1540 420 1568 420"/>
        <path d="M1075 820C1110 810 1210 800 1222 860C1225 930 1200 1080 1185 1090C1160 1115 1110 1110 1090 1090C1075 1060 1070 1040 1066 1020M1080 935C1120 930 1130 990 1080 990"/><use href="#spark" transform="translate(1278 828) scale(.7)"/>
        <rect x="1395" y="822" width="65" height="122" rx="32" transform="rotate(-5 1430 880)"/><path d="M1370 915C1350 1000 1515 1010 1505 900Q1490 880 1488 910C1500 980 1385 985 1380 920Q1372 908 1370 915M1435 985L1455 1035Q1462 1042 1470 1035L1458 982"/>
        <circle cx="178" cy="1180" r="123"/>
        <path d="M178 1170L158 1100Q160 1080 178 1080T198 1100ZM178 1190L158 1260Q160 1280 178 1280T198 1260ZM168 1180L95 1160Q75 1162 75 1180T95 1200ZM188 1180L260 1160Q282 1162 282 1180T260 1200ZM172 1174L108 1130Q95 1110 115 1108T140 1120ZM184 1174L245 1130Q260 1110 240 1108T212 1120ZM172 1186L108 1230Q95 1250 115 1252T140 1240ZM184 1186L245 1230Q260 1250 240 1252T212 1240Z"/>
        <path d="M400 1036L420 1130Q430 1150 455 1142L700 1090Q725 1080 724 1036M470 1155Q462 1165 480 1165L700 1108V1090M318 1050L365 1038"/><path d="M432 1050L445 1110 488 1100 480 1045M500 1040L548 1090M590 1040L600 1078 635 1070M640 1036L650 1066 688 1055" stroke-dasharray="18 8"/>
        <path d="M918 1040C940 1090 950 1100 975 1060C1000 1070 1020 1060 1010 1045M862 1100C860 1080 910 1080 990 1106M1250 1106C1280 1060 1320 1060 1335 1106M580 1295C560 1310 540 1340 560 1345C575 1355 590 1340 600 1330M607 1200C590 1200 570 1230 585 1260"/>
        <path d="M340 1210L380 1190 445 1265 425 1280 548 1415Q550 1425 540 1428H520L340 1225ZM380 1190L400 1225 405 1210 410 1240 430 1240 425 1260 445 1265M0 1400L175 1360 345 1305Q350 1315 190 1362M175 1362L205 1428M190 1355L365 1320Q380 1320 385 1335L402 1428M205 1385L222 1420 235 1395 248 1418 260 1385M280 1395L350 1378Q365 1385 350 1392L285 1402ZM300 1425L360 1412M0 1410L170 1372"/>
        <use href="#heart" transform="translate(1530 1190)"/><path d="M1520 1280L1550 1288 1545 1330 1510 1380C1560 1400 1560 1440 1530 1480C1500 1500 1420 1460 1420 1450C1430 1410 1470 1400 1480 1370ZM580 1428L640 1398 660 1388 730 1400 735 1428M805 1428C810 1360 890 1360 895 1428M940 1410C950 1370 1000 1370 1010 1375L1035 1412M1080 1395L1100 1365M985 1380L965 1428"/>
        <polyline points="207,273 89,383 401,457 1151,80 1262,307 30,1070 339,1105 440,1208 550,1180 77,1334 1406,708 1493,780 1279,924 1314,994 1236,1025 1151,1500 1262,1490 1437,1528 1541,1520 1467,1266 1339,0" class="s"/>
        <polyline points="133,312 143,432 361,426 450,391 1148,32 1101,111 1314,110 535,631 1303,685 1317,732 1361,718 1371,794 1122,780 1117,876 1157,862 1133,916 1173,901 1519,838 1373,1046 1510,1105 755,1079 810,1075 14,1248 780,1378 1148,1434 1474,1448" class="m"/>
        <polyline points="470,452 1355,52 1307,286 1452,741 1186,764 1524,714 1266,980 1524,1032 378,1151 520,1232 24,1326 1384,1524 1080,1470 1555,476" class="l"/>
      </g>

      <!-- Around the composer -->
      <g transform="translate(0 1880) scale(.3444 .3333)">
        <path d="M75 225C20 230 20 165 55 155C30 115 85 85 110 110C140 90 170 110 178 130M40 290C28 310 30 330 42 340M60 585C40 560 55 520 85 530C70 490 130 485 145 510C180 510 220 550 205 588M265 588C290 560 340 575 345 588M340 585C350 570 380 570 395 585M340 130L348 112M570 130L660 95M860 130L875 96M930 130L940 105 975 125M1030 105C1050 135 1130 130 1150 100M1300 130L1385 105 1470 130M700 545L780 580 755 548M1405 560C1420 540 1480 545 1568 545M1405 560C1410 590 1500 585 1568 582M1440 555C1430 575 1500 575 1568 572M1200 575L1240 588M820 588C850 575 880 575 900 588"/>
        <polyline points="424,116 530,108 472,104 960,548 1053,546 1157,554 1332,584 145,34" class="s"/><polyline points="715,120 772,108 508,575 1525,132 675,585" class="m"/><polyline points="22,92 -5,456" class="l"/>
      </g>
      <g transform="translate(540 1700) scale(.3444 .3333)">
        <path d="M0 640L20 670M15 640L40 670M180 670L320 640M420 670C450 630 500 640 530 670M620 670L668 640 725 670M1072 575L1205 625 1110 800Q1105 812 1080 805L1055 800M1045 650L1190 652M1050 650L1022 735"/><circle cx="1210" cy="630" r="75"/><circle cx="1210" cy="630" r="48"/><path d="M1210 582V678M1162 630H1258M1176 596L1244 664M1244 596L1176 664"/>
        <use href="#star" x="1390" y="648"/><use href="#gear" transform="translate(1508 635) scale(.72)"/>
        <path d="M1460 725C1510 720 1550 750 1560 810M1470 755C1510 755 1530 790 1535 830M1120 1120C1110 1080 1150 1080 1240 1128M1150 1095C1180 1070 1260 1080 1280 1128M1428 1120C1430 1090 1480 1090 1500 1115L1525 1125M350 1100C400 1095 395 1090 402 1080C405 1095 405 1100 450 1105C410 1110 405 1120 400 1128C395 1115 390 1108 350 1100M520 1125C520 1095 560 1095 560 1115L590 1128M150 1128C180 1105 290 1105 325 1128M0 1090Q40 1085 38 1105L0 1118"/>
        <polyline points="1087,674 1118,690 1145,674 1100,730 842,1100 637,1097 1262,516 1150,526" class="s"/><polyline points="1108,1035 1536,1054 1485,1010 1384,920" class="m"/><polyline points="1030,1032 965,1075 1542,975 790,1122 1115,855 1548,830" class="l"/>
      </g>
    </svg>

    <section class="messages">
      <article class="bubble out cut"></article>
      <article class="bubble in tall first wide"><svg class="tail" width="23" height="33" viewBox="0 0 23 33"><path d="M23 0H4C1 0-.5 3 1.500 5.500L22 32H23Z"/></svg><p>Welcome to Coronabot - the
Coronavirus symptom tracker. I'm
going to ask you some questions
about your health.</p><time>17:08</time></article>
      <article class="bubble in tall next medium"><p>How do you feel right now?

 1. I feel as healthy as normal.
 2. I'm not feeling quite right.</p><time>17:08</time></article>
      <article class="bubble out"><svg class="tail" width="23" height="33" viewBox="0 0 23 33"><path d="M0 0H19C22 0 23.500 3 21.500 5.500L1 32H0Z"/></svg><p>2</p><time>17:08</time><svg class="ticks" width="49" height="32" viewBox="0 0 49 32"><path d="M2 18.500L11.500 28 32 3M23 25L27.500 28.500 47 3"/></svg></article>
      <article class="bubble in"><svg class="tail" width="23" height="33" viewBox="0 0 23 33"><path d="M23 0H4C1 0-.5 3 1.500 5.500L22 32H23Z"/></svg><p>Do you have a fever?</p><time>17:08</time></article>
      <article class="bubble out"><svg class="tail" width="23" height="33" viewBox="0 0 23 33"><path d="M0 0H19C22 0 23.500 3 21.500 5.500L1 32H0Z"/></svg><p>Yes</p><time>17:08</time><svg class="ticks" width="49" height="32" viewBox="0 0 49 32"><path d="M2 18.500L11.500 28 32 3M23 25L27.500 28.500 47 3"/></svg></article>
      <article class="bubble in tall wide"><svg class="tail" width="23" height="33" viewBox="0 0 23 33"><path d="M23 0H4C1 0-.5 3 1.500 5.500L22 32H23Z"/></svg><p>Do you have a persistent cough
(coughing a lot for more than an hour,
or 3 or more coughing episodes in 24
hours)?</p><time>17:08</time></article>
      <article class="bubble out"><svg class="tail" width="23" height="33" viewBox="0 0 23 33"><path d="M0 0H19C22 0 23.500 3 21.500 5.500L1 32H0Z"/></svg><p>Yes</p><time>17:08</time><svg class="ticks" width="49" height="32" viewBox="0 0 49 32"><path d="M2 18.500L11.500 28 32 3M23 25L27.500 28.500 47 3"/></svg></article>
      <article class="bubble in tall wide stacked"><svg class="tail" width="23" height="33" viewBox="0 0 23 33"><path d="M23 0H4C1 0-.5 3 1.500 5.500L22 32H23Z"/></svg><p>Are you experiencing unusual fatigue?</p><time>17:08</time></article>
      <article class="bubble out"><svg class="tail" width="23" height="33" viewBox="0 0 23 33"><path d="M0 0H19C22 0 23.500 3 21.500 5.500L1 32H0Z"/></svg><p>No</p><time>17:08</time><svg class="ticks" width="49" height="32" viewBox="0 0 49 32"><path d="M2 18.500L11.500 28 32 3M23 25L27.500 28.500 47 3"/></svg></article>
      <article class="bubble in tall wide"><svg class="tail" width="23" height="33" viewBox="0 0 23 33"><path d="M23 0H4C1 0-.5 3 1.500 5.500L22 32H23Z"/></svg><p>Are you experiencing unusual</p></article>
    </section>

    <div class="scroll-thumb"></div>
    <div class="jump"><svg width="38" height="36" viewBox="0 0 38 36" fill="none" stroke="#6b6b6b" stroke-width="4.600"><path d="M2.500 3L19 15.500 35.500 3M2.500 18L19 31 35.500 18"/></svg></div>

    <footer class="composer">
      <div class="field">
        <svg class="emoji" width="64" height="64" viewBox="0 0 64 64"><circle cx="32" cy="32" r="29.500" fill="none" stroke="#868d92" stroke-width="5"/><g fill="#868d92"><ellipse cx="23.500" cy="25" rx="4.200" ry="5.700"/><ellipse cx="40.700" cy="25" rx="4.200" ry="5.700"/><path d="M15.500 35Q32 38.500 48.500 35Q49.500 35 49.300 37C47 47 40 51 32 51S17 47 15 37Q14.800 35 15.500 35Z"/></g><path d="M19 39Q32 42.500 45 39Q42 44 32 44T19 39Z" fill="#fff"/></svg>
        <span class="placeholder">Type a message</span>
        <svg class="clip" width="64" height="58" viewBox="674.500 1964 64 58" fill="none" stroke="#868d92" stroke-width="5.200" stroke-linecap="round"><path d="M709 1970.500L731 1993C744 2008 726 2027 711 2013L681 1983C669 1970 687 1959 696 1969L717 1990C726 1998 717 2006 709 2000L695 1985"/></svg>
        <svg class="camera" width="60" height="56" viewBox="0 0 60 56"><path d="M22 0H37C42 1 43 8 47 8H50Q59.500 9 59.500 18V46Q59.500 55.500 49 55.500H10Q.5 55.500.5 46V18Q.5 9 10 8H12C17 8 17 1 22 0Z" fill="#868d92"/><circle cx="30" cy="29.300" r="12.400" fill="none" stroke="#fff" stroke-width="4.800"/></svg>
      </div>
      <div class="mic"><svg width="46" height="64" viewBox="0 0 46 64"><rect x="14" y="0" width="18" height="38" rx="9" fill="#fff"/><path d="M4 31C4 53 42 53 42 31M23 48V59" fill="none" stroke="#fff" stroke-width="6" stroke-linecap="round"/></svg></div>
    </footer>
  </main>

  <nav class="nav">
    <svg class="recents" width="42" height="46" viewBox="0 0 42 46" stroke="#8c8c8c" stroke-width="6" stroke-linecap="round"><path d="M3 3.500V42.500M21 3.500V42.500M39 3.500V42.500"/></svg>
    <svg class="home" width="49" height="49" viewBox="0 0 49 49" fill="none" stroke="#8c8c8c" stroke-width="6"><rect x="3" y="3" width="42.500" height="42.500" rx="13"/></svg>
    <svg class="navback" width="28" height="47" viewBox="0 0 28 47" fill="none" stroke="#8c8c8c" stroke-width="5.500" stroke-linecap="round"><path d="M24 3.500L4 23.500 24 43.500"/></svg>
  </nav>
</div>
</body>
</html>
```
FILE: styles.css
```css
* { box-sizing: border-box; }
body { margin: 0; font-family: Roboto, sans-serif; }
p, h1 { margin: 0; }
svg { display: block; flex: none; }

.phone { width: 1080px; height: 2220px; display: flex; flex-direction: column; overflow: hidden; }

/* Status bar */
.status { height: 72px; padding: 0 79px; background: #054d43; color: #bed2cf; display: flex; align-items: center; }
.status-time, .percent { font-size: 45px; line-height: 72px; letter-spacing: -.4px; }
.status-time { width: 132px; padding-top: 1px; }
.linkedin { width: 39px; height: 39px; margin: 1px 18px 0 0; border-radius: 3px; background: #bed2cf; color: #054d43; font: bold 37px/36px "Open Sans", sans-serif; letter-spacing: -2px; text-align: center; }
.bbc { width: 29px; margin-left: 5px; display: flex; flex-direction: column; align-items: center; font-family: "Open Sans", sans-serif; }
.bbc-row { display: flex; gap: 1px; }
.bbc-row b { width: 7px; height: 7px; background: #9dbab6; color: #054d43; font-size: 7px; line-height: 7px; text-align: center; }
.bbc-news { font-size: 10.500px; line-height: 11px; font-weight: 600; letter-spacing: -.3px; }
.status-dots { margin-left: 39px; fill: #bed2cf; }
.wifi { margin-left: auto; }
.signal { margin-left: 9px; }
.percent { margin-left: 15px; width: 82px; padding-top: 1px; }
.battery { margin-left: 10px; }

/* Chat header */
.header { height: 168px; padding: 0 59px 0 24px; background: #075e54; color: #fff; display: flex; align-items: center; position: relative; z-index: 2; box-shadow: 0 2px 8px rgba(0,0,0,.25); }
.avatar { margin: -2px 0 0 12px; }
.title { margin: -1px 0 0 23px; width: 500px; font-size: 54px; line-height: 64px; font-weight: 500; white-space: nowrap; }
.call { margin-left: 86px; }
.menu { margin-left: auto; }

/* Conversation */
.chat { position: relative; height: 1836px; display: flex; flex-direction: column; background: linear-gradient(#ebece7 0, #eeebe6 260px, #efe7de 450px, #efe7de 1400px, #efe4dd 1836px); }
.wallpaper { position: absolute; inset: 0; stroke: #dcd8d0; }
.ink { stroke: #dcd8d0; stroke-width: 5.500px; fill: none; }
.wallpaper polyline { stroke: none; fill: none; }
.s { marker: url(#s); }
.m { marker: url(#m); }
.l { marker: url(#l); }

.messages { position: relative; height: 1672px; padding: 0 52px; overflow: hidden; display: flex; flex-direction: column; gap: 25px; }
.bubble { position: relative; flex: none; min-height: 90px; padding: 14px 17px 12px 24px; border-radius: 18px; display: flex; align-items: flex-end; font-size: 48px; line-height: 57px; box-shadow: 0 2px 2px rgba(0,0,0,.17); }
.bubble p { white-space: pre; margin-bottom: 7px; }
.bubble time { font-size: 36px; line-height: 42px; color: #9b9b9b; margin-left: auto; }
.in { align-self: flex-start; width: 610px; background: #fff; color: #212121; border-top-left-radius: 0; }
.out { align-self: flex-end; background: #e1ffc7; color: #1c2117; border-top-right-radius: 0; }
.out time { margin-left: 24px; color: #889b78; }
.ticks { fill: none; stroke: #93ae8c; stroke-width: 4.200; stroke-linecap: round; }
.out .ticks { align-self: center; margin: 14px 3px 0 10.500px; }
.tail { position: absolute; top: 0; fill: #fff; }
.in .tail { left: -22px; }
.out .tail { right: -22px; fill: #e1ffc7; }

.tall { display: grid; height: 257px; padding: 12px 17px 10px 24px; }
.tall p, .tall time { grid-area: 1 / 1; }
.tall p { align-self: start; }
.tall time { place-self: end; }
.next { margin-top: -17px; border-top-left-radius: 18px; }
.wide { width: 856px; }
.medium { width: 819px; }
.stacked { height: 138px; }
.cut { width: 264px; height: 18px; min-height: 0; padding: 0; border-radius: 0 0 18px 18px; }

.scroll-thumb { position: absolute; left: 1065px; top: 829px; width: 33px; height: 415px; border: 1.500px solid #9f9c98; border-radius: 18px; background: rgba(250,250,249,.9); }
.jump { position: absolute; left: 947px; top: 1528px; width: 98px; height: 98px; padding-top: 8px; border-radius: 50%; background: rgba(250,250,250,.9); display: flex; align-items: center; justify-content: center; box-shadow: 0 2px 4px rgba(0,0,0,.12); }

/* Composer */
.composer { position: relative; height: 164px; padding: 10px 13px 0 15px; display: flex; justify-content: space-between; }
.field { width: 896px; height: 136px; margin-top: 2px; padding: 2px 43px 0 32px; border-radius: 68px; background: #fff; display: flex; align-items: center; box-shadow: 0 2px 3px rgba(0,0,0,.2); }
.placeholder { margin: 2px 0 0 33px; width: 531px; font-size: 54px; line-height: 64px; color: #a8a8a8; white-space: nowrap; }
.clip { margin-top: -1px; }
.camera { margin: -7px 0 0 70px; }
.mic { width: 141px; height: 141px; border-radius: 50%; background: #00897b; display: flex; align-items: center; justify-content: center; box-shadow: 0 3px 8px rgba(0,0,0,.28); }

/* System navigation */
.nav { height: 144px; padding: 2px 220px 0 221px; background: #f1f1f1; display: flex; align-items: center; justify-content: space-between; }
.home { margin-right: 7px; }
```
